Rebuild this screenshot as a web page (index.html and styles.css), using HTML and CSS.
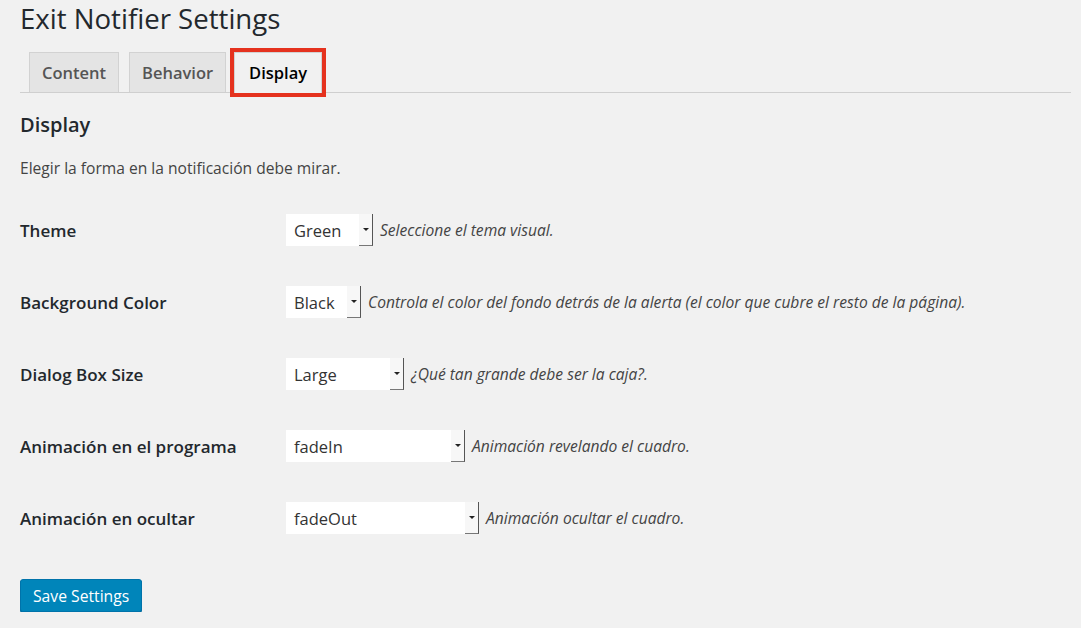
FILE: index.html
```html
<!DOCTYPE html>
<html lang="es">
<head>
<meta charset="utf-8">
<title>Exit Notifier Settings</title>
<link rel="stylesheet" href="styles.css">
</head>
<body>
<div class="wrap">
  <h1 class="title">Exit Notifier Settings</h1>
  <nav class="tabs">
    <a class="tab">Content</a>
    <a class="tab">Behavior</a>
    <a class="tab active">Display</a>
  </nav>
  <h2 class="section">Display</h2>
  <p class="intro">Elegir la forma en la notificación debe mirar.</p>
  <div class="rows">
    <div class="row">
      <div class="label">Theme</div>
      <div class="field">
        <div class="select w-theme"><span class="val">Green</span><span class="arrow"></span></div>
        <span class="hint">Seleccione el tema visual.</span>
      </div>
    </div>
    <div class="row">
      <div class="label">Background Color</div>
      <div class="field">
        <div class="select w-bg"><span class="val">Black</span><span class="arrow"></span></div>
        <span class="hint">Controla el color del fondo detrás de la alerta (el color que cubre el resto de la página).</span>
      </div>
    </div>
    <div class="row">
      <div class="label">Dialog Box Size</div>
      <div class="field">
        <div class="select w-size"><span class="val">Large</span><span class="arrow"></span></div>
        <span class="hint">¿Qué tan grande debe ser la caja?.</span>
      </div>
    </div>
    <div class="row">
      <div class="label">Animación en el programa</div>
      <div class="field">
        <div class="select w-in"><span class="val">fadeIn</span><span class="arrow"></span></div>
        <span class="hint">Animación revelando el cuadro.</span>
      </div>
    </div>
    <div class="row">
      <div class="label">Animación en ocultar</div>
      <div class="field">
        <div class="select w-out"><span class="val">fadeOut</span><span class="arrow"></span></div>
        <span class="hint">Animación ocultar el cuadro.</span>
      </div>
    </div>
  </div>
  <button class="save">Save Settings</button>
</div>
</body>
</html>
```

FILE: styles.css
```css
html, body {
  margin: 0;
  padding: 0;
  background: #f1f1f1;
  font-family: "Open Sans", "Noto Sans", sans-serif;
  color: #23282d;
}

.wrap {
  padding: 0 10px 0 20px;
}

.title {
  margin: 2px 0 0;
  font-size: 27.6px;
  font-weight: 400;
  line-height: 32px;
  color: #23282d;
}

.tabs {
  display: flex;
  margin-top: 18px;
  padding-left: 9px;
  border-bottom: 1px solid #cfcfcf;
  height: 40px;
}

.tab {
  display: flex;
  align-items: center;
  height: 40px;
  box-sizing: border-box;
  padding: 0 12px;
  margin-right: 10px;
  background: #e4e4e4;
  border: 1px solid #d2d2d2;
  border-bottom: none;
  font-size: 16.5px;
  font-weight: 600;
  color: #555;
}

.tab.active {
  background: #f1f1f1;
  color: #000;
  height: 41px;
  padding: 0 14px 1px;
  margin-left: -2px;
  outline: 4px solid #e5321e;
  outline-offset: 0;
}

.section {
  margin: 19px 0 0;
  font-size: 20px;
  font-weight: 600;
  line-height: 26px;
  color: #23282d;
}

.intro {
  margin: 19px 0 0;
  font-size: 15.6px;
  line-height: 22px;
  color: #444;
}

.rows {
  margin-top: 15px;
}

.row {
  display: flex;
  align-items: center;
  height: 72px;
}

.label {
  width: 266px;
  font-size: 17px;
  font-weight: 600;
  color: #23282d;
}

.field {
  display: flex;
  align-items: center;
}

.select {
  display: flex;
  height: 32px;
  box-sizing: border-box;
  background: #fff;
}

.val {
  flex: 1;
  display: flex;
  align-items: center;
  padding-left: 8px;
  font-size: 16.5px;
  color: #333;
}

.arrow {
  position: relative;
  width: 13px;
  background: #f7f7f7;
  border-right: 1px solid #555;
  border-bottom: 1px solid #777;
}

.arrow::after {
  content: "";
  position: absolute;
  left: 4px;
  top: 14px;
  border-left: 3px solid transparent;
  border-right: 3px solid transparent;
  border-top: 3px solid #222;
}

.w-theme { width: 87px; }
.w-bg { width: 75px; }
.w-size { width: 118px; }
.w-in { width: 179px; }
.w-out { width: 193px; }

.hint {
  margin-left: 7px;
  font-size: 15.6px;
  font-style: italic;
  color: #444;
}

.save {
  display: block;
  margin-top: 25px;
  height: 33px;
  padding: 0 12px;
  background: #0085ba;
  border: 1px solid #0073aa;
  border-radius: 3px;
  box-shadow: 0 1px 0 #006799;
  color: #fff;
  font-family: "Open Sans", "Noto Sans", sans-serif;
  font-size: 15.7px;
}
```
